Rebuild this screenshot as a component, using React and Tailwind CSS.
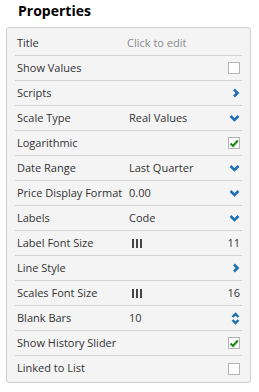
import React from "react";

const ChevRight = () => (
  <svg width="8" height="10" viewBox="0 0 8 10" className="block">
    <polyline points="2,1.5 5.5,5 2,8.5" fill="none" stroke="#1f6fb5" strokeWidth="2.6" strokeLinecap="butt" strokeLinejoin="miter" />
  </svg>
);

const ChevDown = () => (
  <svg width="11" height="8" viewBox="0 0 11 8" className="block">
    <polyline points="1.5,2 5.5,6 9.5,2" fill="none" stroke="#1f6fb5" strokeWidth="2.6" strokeLinecap="butt" strokeLinejoin="miter" />
  </svg>
);

const UpDown = () => (
  <svg width="9" height="13" viewBox="0 0 9 13" className="block">
    <polyline points="1.5,5 4.5,2 7.5,5" fill="none" stroke="#1f6fb5" strokeWidth="2.4" />
    <polyline points="1.5,8 4.5,11 7.5,8" fill="none" stroke="#1f6fb5" strokeWidth="2.4" />
  </svg>
);

const Checkbox = ({ checked }) => (
  <div className="w-[12px] h-[12px] border border-[#b5b5b5] bg-white flex items-center justify-center">
    {checked && (
      <svg width="10" height="9" viewBox="0 0 10 9" className="block">
        <polyline points="1.5,4.5 4,7 8.8,1.5" fill="none" stroke="#1d8a1d" strokeWidth="2.2" />
      </svg>
    )}
  </div>
);

const Grip = () => (
  <div className="flex gap-[2px] h-[9px] ml-[3px]">
    <div className="w-[2px] bg-[#444]" />
    <div className="w-[2px] bg-[#444]" />
    <div className="w-[2px] bg-[#444]" />
  </div>
);

const rows = [
  { label: "Title", value: "Click to edit", muted: true },
  { label: "Show Values", right: <Checkbox /> },
  { label: "Scripts", right: <ChevRight /> },
  { label: "Scale Type", value: "Real Values", right: <ChevDown /> },
  { label: "Logarithmic", right: <Checkbox checked /> },
  { label: "Date Range", value: "Last Quarter", right: <ChevDown /> },
  { label: "Price Display Format", value: "0.00", right: <ChevDown /> },
  { label: "Labels", value: "Code", right: <ChevDown /> },
  { label: "Label Font Size", grip: true, num: "11" },
  { label: "Line Style", right: <ChevRight /> },
  { label: "Scales Font Size", grip: true, num: "16" },
  { label: "Blank Bars", value: "10", right: <UpDown /> },
  { label: "Show History Slider", right: <Checkbox checked /> },
  { label: "Linked to List", right: <Checkbox /> },
];

export default function App() {
  return (
    <div className="w-[259px] h-[392px] bg-white text-[#333]" style={{ fontFamily: '"Open Sans", sans-serif' }}>
      <div className="h-[27px] pl-[18px] pt-[1px] text-[14px] font-bold text-black leading-[19px]">Properties</div>
      <div className="ml-[6px] w-[245px] border border-[#cfcfcf] rounded-[3px] bg-[#f4f4f4] px-[8px] pt-[3px] pb-[1px]">
        {rows.map((r, i) => (
          <div
            key={r.label}
            className={
              "h-[25px] flex items-center pl-[2px] pr-[2px] text-[11px] " +
              (i < rows.length - 1 ? "border-b border-[#d2d2d2]" : "")
            }
          >
            <div className="w-[112px] shrink-0 whitespace-nowrap overflow-visible">{r.label}</div>
            <div className={"flex-1 flex items-center whitespace-nowrap " + (r.muted ? "text-[#8a8a8a] -ml-[2px]" : "")}>
              {r.grip && <Grip />}
              {r.value}
            </div>
            {r.num && <div className="text-right">{r.num}</div>}
            {r.right && <div className="flex items-center justify-end">{r.right}</div>}
          </div>
        ))}
      </div>
    </div>
  );
}
